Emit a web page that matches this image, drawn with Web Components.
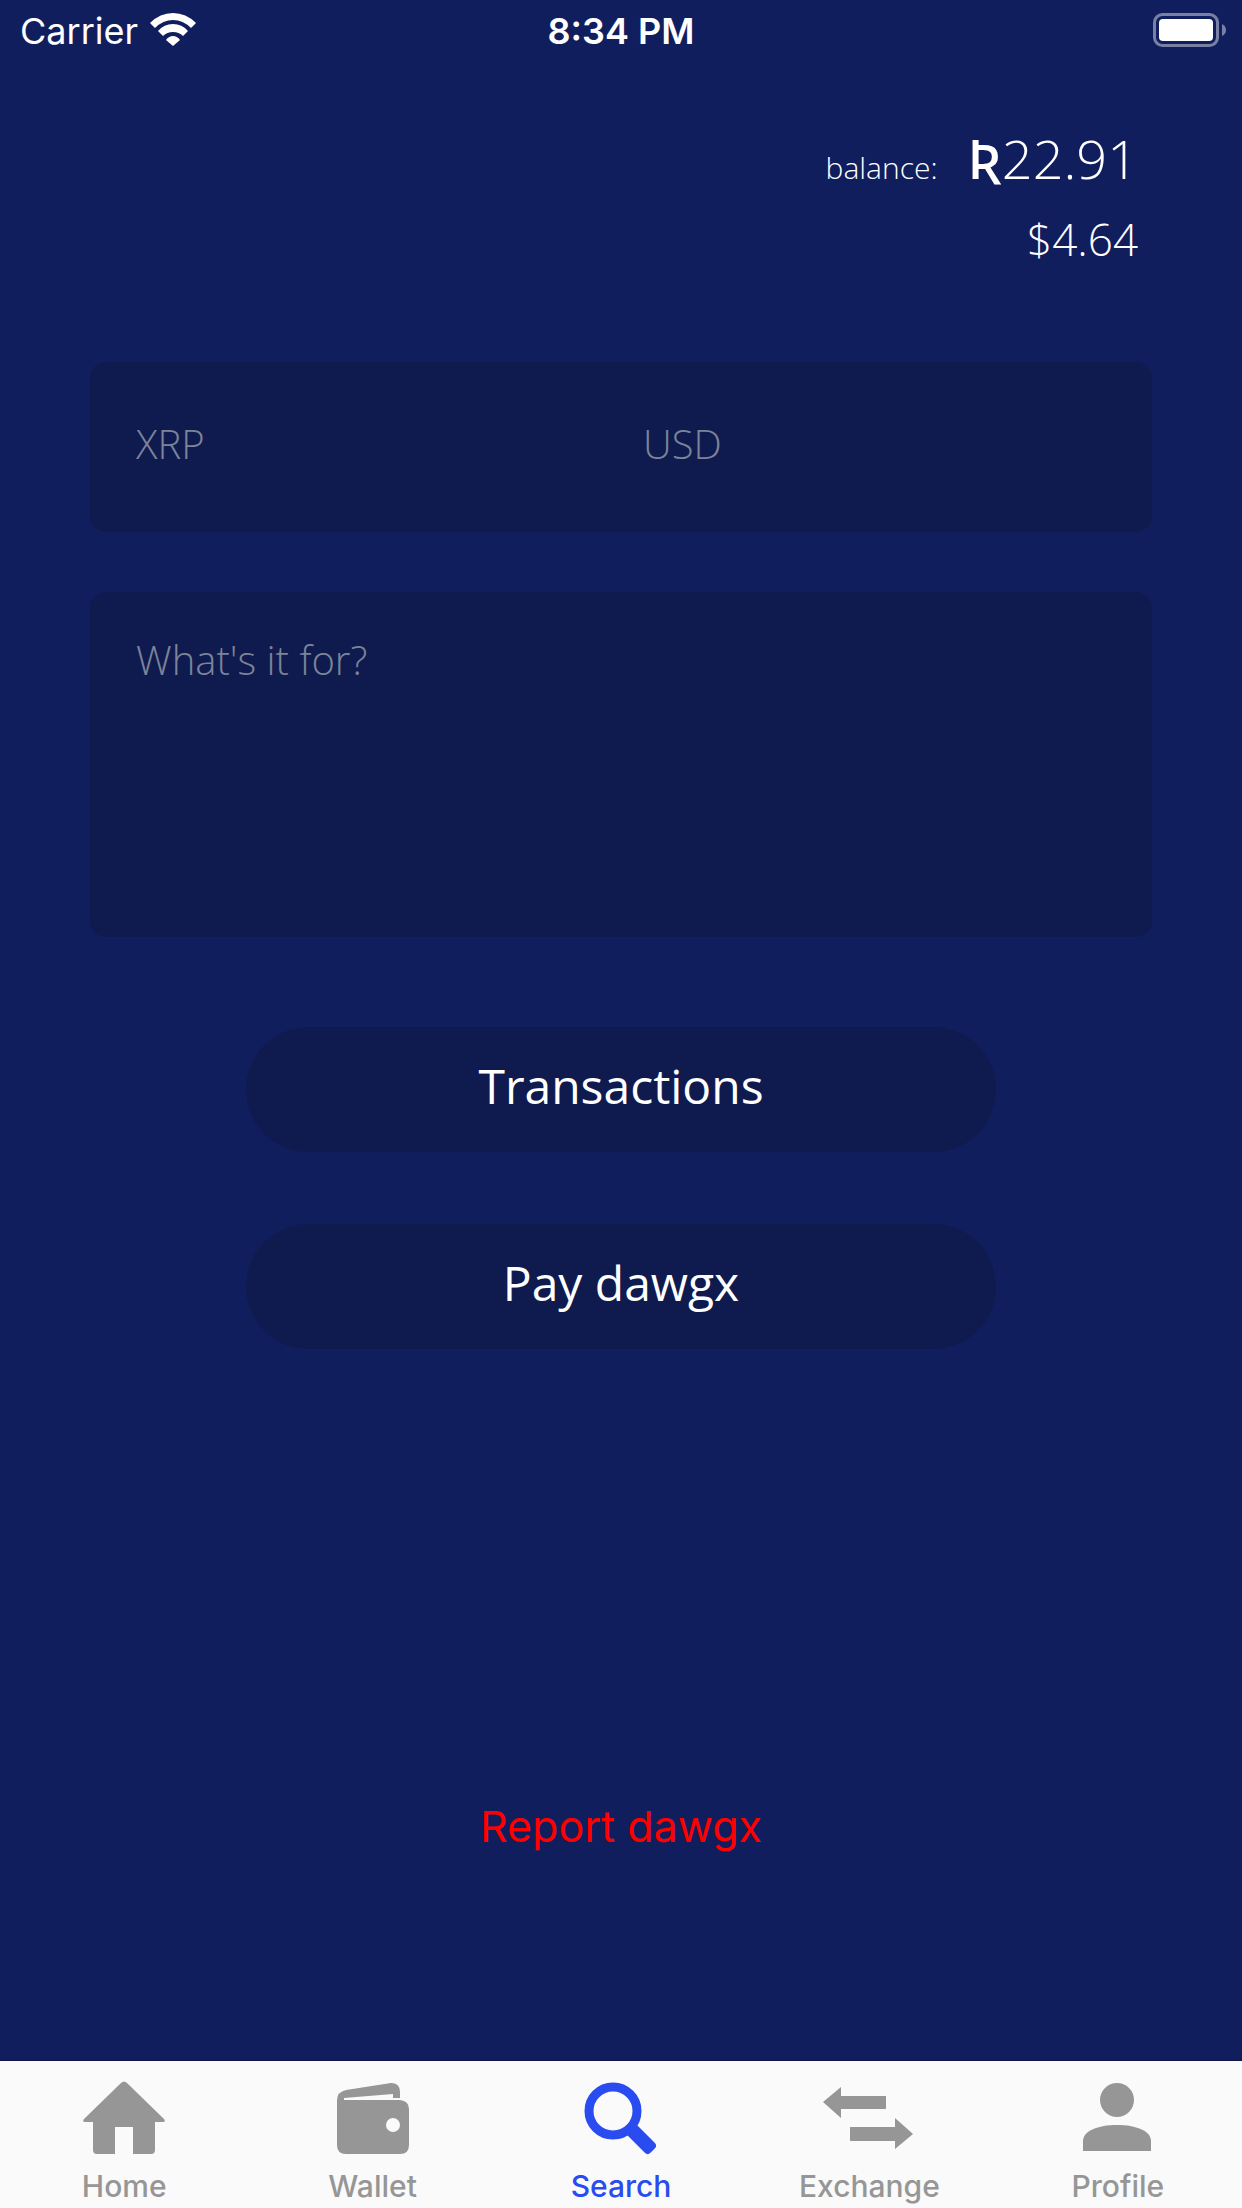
<!DOCTYPE html>
<html lang="en">
<head>
<meta charset="utf-8">
<meta name="viewport" content="width=device-width, initial-scale=1">
<title>Pay dawgx</title>
<style>
  html, body { margin: 0; background: #111e5e; }
</style>
</head>
<body>
<pay-screen></pay-screen>
<script>
const define = (name, html, setup) => {
  const template = document.createElement('template');
  template.innerHTML = html;
  customElements.define(name, class extends HTMLElement {
    constructor() {
      super();
      this.attachShadow({ mode: 'open' }).append(template.content.cloneNode(true));
    }
    connectedCallback() { if (setup) setup(this, this.shadowRoot); }
  });
};

define('status-bar', `
  <style>
    :host { display: grid; grid-template-columns: 1fr auto 1fr; align-items: center; height: 62px;
      padding: 0 16px; font: 400 36px/44px Inter, "Liberation Sans", sans-serif; color: #fff; }
    .left { display: flex; align-items: center; gap: 12px; padding-left: 4px; }
    .time { font-weight: 600; }
    .battery { justify-self: end; }
    svg { display: block; margin-bottom: 2px; }
  </style>
  <div class="left"><span>Carrier</span>
    <svg width="46" height="34" viewBox="0 0 46 34" fill="#fff" aria-hidden="true">
      <path d="M0 10Q10 0 23 0T46 10L41 15Q33 7 23 7T5 15Z"/>
      <path d="M8 18Q14 11 23 11T38 18L33 23Q29 19 23 19T13 23Z"/>
      <path d="M16 27Q19 23 23 23T30 27L23 33Z"/>
    </svg>
  </div>
  <span class="time">8:34 PM</span>
  <svg class="battery" width="73" height="34" viewBox="0 0 73 34" role="img" aria-label="Battery full">
    <rect x="1.5" y="1.5" width="63" height="31" rx="8" fill="none" stroke="#7880a4" stroke-width="3"/>
    <rect x="6" y="6" width="54" height="22" rx="4" fill="#fff"/>
    <path d="M69 11Q73 13 73 17T69 23Z" fill="#7880a4"/>
  </svg>`);

define('balance-summary', `
  <style>
    :host { display: flex; flex-direction: column; align-items: flex-end; color: #fff;
      font-family: "Open Sans", "Noto Sans", sans-serif; font-weight: 300; }
    .row { display: flex; align-items: baseline; gap: 30px; font-size: 54px; line-height: 80px; }
    .label { font-size: 30px; }
    .sign { font-family: "Noto Sans", "DejaVu Sans", sans-serif; font-weight: 500; }
    .fiat { font-size: 44px; line-height: 62px; }
  </style>
  <div class="row"><span class="label">balance:</span><span><span class="sign">Ʀ</span><slot name="xrp"></slot></span></div>
  <div class="fiat"><slot name="usd"></slot></div>`);

const fieldStyle = `
    :host { display: flex; background: #0f1b4f; border-radius: 16px; }
    input, textarea { flex: 1; min-width: 0; box-sizing: border-box; margin: 0; border: 0; outline: 0; resize: none;
      background: none; color: #fff; font: 300 40px/56px "Open Sans", "Noto Sans", sans-serif; }
    ::placeholder { color: #7c8499; opacity: 1; }`;

define('amount-fields', `
  <style>${fieldStyle}
    :host { gap: 44px; padding: 0 46px; height: 170px; }
    input { padding: 0 0 6px; }
  </style>
  <input type="text" inputmode="decimal" placeholder="XRP" aria-label="Amount in XRP">
  <input type="text" inputmode="decimal" placeholder="USD" aria-label="Amount in USD">`);

define('memo-field', `
  <style>${fieldStyle}
    textarea { height: 345px; padding: 40px 46px; }
  </style>
  <textarea placeholder="What's it for?" aria-label="What's it for?"></textarea>`);

define('pill-button', `
  <style>
    :host { display: block; }
    button { display: block; width: 100%; height: 125px; padding: 0 0 8px; border: 0; border-radius: 63px;
      background: #0f1b4f; color: #fff; font: 400 48px/70px "Open Sans", "Noto Sans", sans-serif; }
  </style>
  <button type="button"><slot></slot></button>`);

define('report-button', `
  <style>
    :host { display: block; }
    button { border: 0; padding: 0; background: none; color: #f00;
      font: 400 43px/60px Inter, "Liberation Sans", sans-serif; }
  </style>
  <button type="button"><slot></slot></button>`);

const icons = {
  home: '<path d="M45 2Q48-1 51 2L88 38Q90 41 87 41H79V69Q79 73 75 73H57V46H39V73H21Q17 73 17 69V41H9Q6 41 8 38Z"/>',
  wallet: '<path fill-rule="evenodd" d="M12 19Q12 11 21 9L66 2Q75 2 75 11V17H68V13L19 17V19H75Q84 20 84 28V64Q84 73 75 73H21Q12 73 12 64ZM68 37A7 7 0 1 0 68 51A7 7 0 1 0 68 37Z"/>',
  search: '<circle cx="40" cy="30" r="24" fill="none" stroke="currentColor" stroke-width="9"/><rect x="-7" y="24" width="14" height="32" rx="4" transform="translate(40 30) rotate(-45)"/>',
  exchange: '<path d="M2 21L20 6V15H65V28H20V37ZM29 46H74V37L92 53L74 68V60H29Z"/>',
  profile: '<circle cx="47" cy="19" r="17"/><path d="M13 70V60C13 50 28 44 47 44S81 50 81 60V70Z"/>'
};

define('tab-item', `
  <style>
    :host { flex: 1; min-width: 0; color: #969696; }
    :host([current]) { color: #294bef; }
    a { display: flex; flex-direction: column; align-items: center; gap: 13px; color: inherit; text-decoration: none;
      font: 500 30px/36px Inter, "Liberation Sans", sans-serif; }
    svg { display: block; fill: currentColor; }
  </style>
  <a href="#"><svg width="96" height="74" viewBox="0 0 96 74" aria-hidden="true"></svg><span><slot></slot></span></a>`,
  (host, root) => {
    root.querySelector('svg').innerHTML = icons[host.getAttribute('icon')];
    if (host.hasAttribute('current')) root.querySelector('a').setAttribute('aria-current', 'page');
  });

define('tab-bar', `
  <style>
    :host { display: block; background: #fafafa; border-top: 1px solid #0e1548; }
    nav { display: flex; padding: 20px 0 4px; }
  </style>
  <nav aria-label="Main"><slot></slot></nav>`);

define('pay-screen', `
  <style>
    :host { display: flex; flex-direction: column; min-height: 100vh; background: #111e5e; }
    main { flex: 1; display: flex; flex-direction: column; padding: 56px 90px 204px; }
    balance-summary { padding-right: 14px; margin-bottom: 92px; }
    amount-fields { margin-bottom: 60px; }
    .actions { display: grid; gap: 72px; width: 750px; max-width: 100%; margin: 90px auto 0; }
    report-button { margin: auto auto 0; }
  </style>
  <status-bar></status-bar>
  <main>
    <balance-summary><span slot="xrp">22.91</span><span slot="usd">$4.64</span></balance-summary>
    <amount-fields></amount-fields>
    <memo-field></memo-field>
    <div class="actions">
      <pill-button>Transactions</pill-button>
      <pill-button>Pay dawgx</pill-button>
    </div>
    <report-button>Report dawgx</report-button>
  </main>
  <tab-bar>
    <tab-item icon="home">Home</tab-item>
    <tab-item icon="wallet">Wallet</tab-item>
    <tab-item icon="search" current>Search</tab-item>
    <tab-item icon="exchange">Exchange</tab-item>
    <tab-item icon="profile">Profile</tab-item>
  </tab-bar>`);
</script>
</body>
</html>
